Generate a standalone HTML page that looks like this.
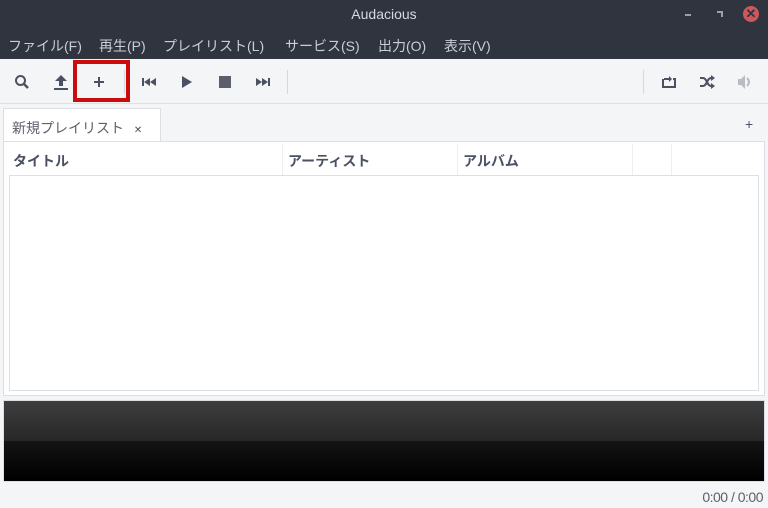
<!DOCTYPE html>
<html><head><meta charset="utf-8"><style>
*{margin:0;padding:0;box-sizing:border-box}
body{width:768px;height:508px;background:#f4f5f7;font-family:"Liberation Sans","Noto Sans CJK JP",sans-serif;position:relative;overflow:hidden}
.a{position:absolute}
#title{left:0;top:0;width:768px;height:31px;background:#2f343f;color:#d3dae3;font-size:14px;text-align:center;line-height:28px}
#menu{left:0;top:31px;width:768px;height:28px;background:#2f343f;color:#c8ced8;font-size:14px}
#menu span{position:absolute;top:5px}
#tb{left:0;top:59px;width:768px;height:45px;background:#f4f5f7;border-bottom:1px solid #dcdfe3}
.sep{position:absolute;top:11px;width:1px;height:24px;background:#d5d8dd}
</style></head><body>
<div id="title" class="a">Audacious</div>
<div class="a" style="left:685px;top:14px;width:6px;height:2px;background:#9aa0ab"></div>
<div class="a" style="left:717px;top:11px;width:6px;height:6px;border-top:2px solid #9aa0ab;border-right:2px solid #9aa0ab;transform:rotate(0)"></div>
<div class="a" style="left:743px;top:6px;width:16px;height:16px;border-radius:50%;background:#cc575d;color:#2f343f;font-size:13px;font-weight:bold;text-align:center;line-height:16px">✕</div>
<div id="menu" class="a">
<span style="left:8px">ファイル(F)</span><span style="left:99px">再生(P)</span><span style="left:163px">プレイリスト(L)</span><span style="left:285px">サービス(S)</span><span style="left:378px">出力(O)</span><span style="left:444px">表示(V)</span>
</div>
<div id="tb" class="a">
<svg class="a" style="left:14px;top:15px" width="16" height="16"><circle cx="6.5" cy="6.5" r="4.5" fill="none" stroke="#4b5162" stroke-width="2"/><line x1="10" y1="10" x2="14" y2="14" stroke="#4b5162" stroke-width="2.5"/></svg>
<svg class="a" style="left:53px;top:15px" width="16" height="16"><path d="M8 1 L14 7 H10 V12 H6 V7 H2 Z" fill="#4b5162"/><rect x="1" y="14" width="14" height="2" fill="#4b5162"/></svg>
<div class="a" style="left:73px;top:1px;width:57px;height:42px;border:4px solid #cc0c0c"></div>
<svg class="a" style="left:92px;top:16px" width="14" height="14"><rect x="6" y="2" width="2" height="10" fill="#4b5162"/><rect x="2" y="6" width="10" height="2" fill="#4b5162"/></svg>
<div class="sep" style="left:124px"></div>
<svg class="a" style="left:141px;top:17px" width="16" height="12"><rect x="1" y="2" width="2" height="8" fill="#4b5162"/><path d="M3 6 L9 2 V10Z M9 6 L15 2 V10Z" fill="#4b5162"/></svg>
<svg class="a" style="left:181px;top:16px" width="12" height="14"><path d="M1 1 L11 7 L1 13Z" fill="#4b5162"/></svg>
<div class="a" style="left:219px;top:17px;width:12px;height:12px;background:#5a5f6b"></div>
<svg class="a" style="left:255px;top:17px" width="16" height="12"><path d="M1 2 L7 6 L1 10Z M7 2 L13 6 L7 10Z" fill="#4b5162"/><rect x="13" y="2" width="2" height="8" fill="#4b5162"/></svg>
<div class="sep" style="left:287px"></div>
<div class="sep" style="left:643px"></div>
<svg class="a" style="left:661px;top:15px" width="16" height="16"><path d="M3 5 H8 M12 5 H14 V13 H2 V5" fill="none" stroke="#4b5162" stroke-width="2"/><path d="M8 2 L11 5 L8 8Z" fill="#4b5162"/></svg>
<svg class="a" style="left:699px;top:15px" width="16" height="16"><path d="M1 4 H4 C8 4 8 12 12 12 H14 M1 12 H4 C8 12 8 4 12 4 H14" fill="none" stroke="#4b5162" stroke-width="2"/><path d="M12 1 L16 4 L12 7Z M12 9 L16 12 L12 15Z" fill="#4b5162"/></svg>
<svg class="a" style="left:737px;top:15px" width="16" height="16"><path d="M1 5 H4 L8 1 V15 L4 11 H1Z" fill="#b8bcc4"/><path d="M10 4 Q14 8 10 12" fill="none" stroke="#b8bcc4" stroke-width="2"/></svg>
</div>
<div class="a" style="left:3px;top:108px;width:158px;height:34px;background:#fff;border:1px solid #dcdfe3;border-bottom:none;font-size:14px;color:#5c616c;padding:9px 0 0 8px">新規プレイリスト <span style="font-size:10px;margin-left:6px;color:#4b5162">✕</span></div>
<div class="a" style="left:745px;top:116px;font-size:14px;color:#4b5162">+</div>
<div class="a" style="left:3px;top:141px;width:762px;height:255px;background:#fff;border:1px solid #dcdfe3"></div>
<div class="a" style="left:10px;top:143px;width:748px;height:33px;font-size:14px;font-weight:bold;color:#4b5162">
<span class="a" style="left:3px;top:8px">タイトル</span>
<div class="a" style="left:272px;top:1px;width:1px;height:31px;background:#eceef1"></div>
<span class="a" style="left:278px;top:8px">アーティスト</span>
<div class="a" style="left:447px;top:1px;width:1px;height:31px;background:#eceef1"></div>
<span class="a" style="left:453px;top:8px">アルバム</span>
<div class="a" style="left:622px;top:1px;width:1px;height:31px;background:#eceef1"></div>
<div class="a" style="left:661px;top:1px;width:1px;height:31px;background:#eceef1"></div>
</div>
<div class="a" style="left:9px;top:175px;width:750px;height:216px;background:#fff;border:1px solid #dcdfe3"></div>
<div class="a" style="left:3px;top:400px;width:762px;height:82px;border:1px solid #dcdfe3;background:linear-gradient(#3e3e3e,#272727 50%,#141414 50%,#000)"></div>
<div class="a" style="right:5px;top:489px;font-size:14px;color:#5c616c;letter-spacing:-0.5px">0:00 / 0:00</div>
</body></html>
